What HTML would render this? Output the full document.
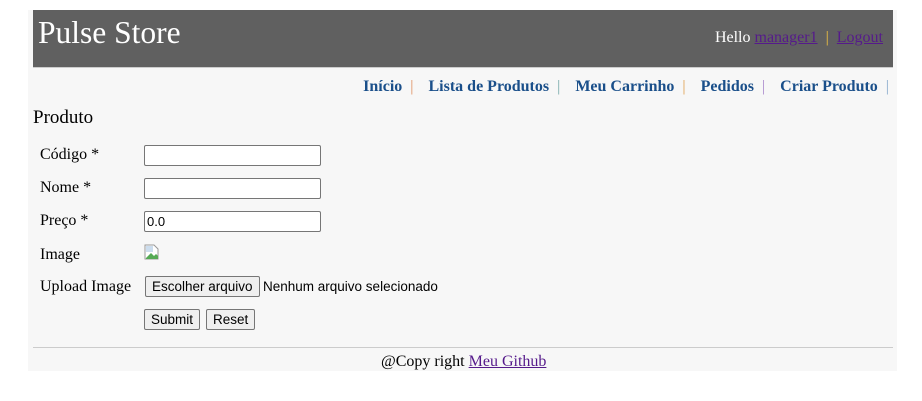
<!DOCTYPE html>
<html><head><style>
body{margin:0;background:#fff;font-family:"Liberation Serif",serif;}
.wrap{position:absolute;left:28px;top:10px;width:869px;height:361px;background:#f7f7f7;}
.hdr{position:absolute;left:33px;top:10px;width:860px;height:57px;background:#606060;border-bottom:1px solid #ccc;}
.t{position:absolute;white-space:nowrap;}
.title{left:38px;top:15px;font-size:31.5px;color:#fff;}
.hello{right:39px;top:29px;font-size:16px;color:#fff;}
a{color:#551a8b;}
.nav{right:33px;top:78px;font-size:16px;font-weight:bold;color:#1a4f8a;}
.nav span{font-weight:normal;margin:0 11px 0 8px;}
.lbl{font-size:16px;color:#000;left:40px;}
input.tx{position:absolute;left:144px;width:171px;height:17px;border:1px solid #767676;border-radius:2px;padding:1px 2px;font:13px "Liberation Sans",sans-serif;background:#fff;box-sizing:content-box;}
.btn{position:absolute;height:21px;border:1px solid #767676;border-radius:2px;background:#efefef;font:13.5px "Liberation Sans",sans-serif;padding:0 6px;box-sizing:border-box;line-height:19px;}
</style></head><body>
<div class="wrap"></div>
<div class="hdr"></div>
<div class="t title">Pulse Store</div>
<div class="t hello">Hello <a href="#">manager1</a> <span style="color:#f0c040">&nbsp;|&nbsp;</span> <a href="#">Logout</a></div>
<div class="t nav">Início<span style="color:#e09060">|</span> Lista de Produtos<span style="color:#7aa">|</span> Meu Carrinho<span style="color:#e0a050">|</span> Pedidos<span style="color:#a8c">|</span> Criar Produto<span style="color:#8ac;margin-right:0">|</span></div>
<div class="t" style="left:33px;top:107px;font-size:19px;">Produto</div>
<div class="t lbl" style="top:146px">Código *</div>
<input class="tx" style="top:145px">
<div class="t lbl" style="top:179px">Nome *</div>
<input class="tx" style="top:178px">
<div class="t lbl" style="top:212px">Preço *</div>
<input class="tx" style="top:211px" value="0.0">
<div class="t lbl" style="top:246px">Image</div>
<svg style="position:absolute;left:144px;top:244px" width="16" height="16"><path d="M1 1h9l4 4v10H1z" fill="#fff" stroke="#999"/><path d="M2 14l5-5 3 3 2-2 2 2v3H2z" fill="#5a5"/><rect x="2" y="2" width="7" height="6" fill="#cde"/></svg>
<div class="t lbl" style="top:278px">Upload Image</div>
<div class="btn" style="left:145px;top:276px">Escolher arquivo</div>
<div class="t" style="left:263px;top:279px;font:13.5px 'Liberation Sans',sans-serif;">Nenhum arquivo selecionado</div>
<div class="btn" style="left:144px;top:309px">Submit</div>
<div class="btn" style="left:206px;top:309px">Reset</div>
<div style="position:absolute;left:33px;top:347px;width:860px;border-top:1px solid #ccc"></div>
<div class="t" style="left:381px;top:353px;font-size:16px;">@Copy right <a href="#">Meu Github</a></div>
</body></html>
